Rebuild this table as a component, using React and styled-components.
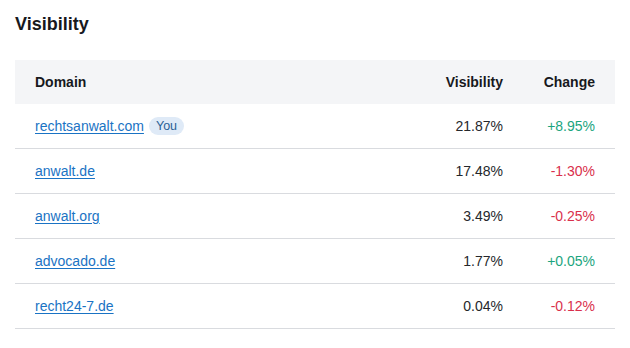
import styled, { createGlobalStyle } from 'styled-components';

const GlobalStyle = createGlobalStyle`
    body {
        margin: 0;
        background: #ffffff;
        font-family: 'Liberation Sans', Arial, sans-serif;
        color: #1b1d21;
    }
`

const Wrapper = styled.div`
    padding: 14px 15px 0 15px;
`
const Title = styled.h2`
    margin: 0 0 25px 0;
    font-size: 18px;
    font-weight: 700;
    line-height: 21px;
    color: #17191d;
`
const Table = styled.div`
    display: grid;
    grid-template-columns: 1fr 112px 92px;
`
const HeadCell = styled.div`
    height: 44px;
    display: flex;
    align-items: center;
    justify-content: ${p => (p.right ? 'flex-end' : 'flex-start')};
    padding: 0 20px;
    background: #f4f5f7;
    font-size: 14px;
    font-weight: 700;
    color: #17191d;
`
const Cell = styled.div`
    height: 44px;
    display: flex;
    align-items: center;
    justify-content: ${p => (p.right ? 'flex-end' : 'flex-start')};
    padding: 0 20px;
    border-bottom: 1px solid #d9dbdf;
    font-size: 14px;
    color: ${p => p.color || '#25272b'};
`
const DomainLink = styled.a`
    color: #1a73c4;
    text-decoration: underline;
    text-underline-offset: 2px;
    cursor: pointer;
`
const Badge = styled.span`
    margin-left: 5px;
    padding: 0 7px;
    height: 18px;
    line-height: 18px;
    border-radius: 9px;
    background: #dfeaf7;
    color: #2a5f95;
    font-size: 12.5px;
`

const rows = [
    { domain: 'rechtsanwalt.com', you: true, visibility: '21.87%', change: '+8.95%' },
    { domain: 'anwalt.de', visibility: '17.48%', change: '-1.30%' },
    { domain: 'anwalt.org', visibility: '3.49%', change: '-0.25%' },
    { domain: 'advocado.de', visibility: '1.77%', change: '+0.05%' },
    { domain: 'recht24-7.de', visibility: '0.04%', change: '-0.12%' },
]

export default function App(){
    return(
        <Wrapper>
            <GlobalStyle />
            <Title>Visibility</Title>
            <Table>
                <HeadCell>Domain</HeadCell>
                <HeadCell right>Visibility</HeadCell>
                <HeadCell right>Change</HeadCell>
                {rows.map(r => [
                    <Cell key={r.domain + 'd'}>
                        <DomainLink>{r.domain}</DomainLink>
                        {r.you && <Badge>You</Badge>}
                    </Cell>,
                    <Cell key={r.domain + 'v'} right>{r.visibility}</Cell>,
                    <Cell key={r.domain + 'c'} right color={r.change.startsWith('+') ? '#1ba57e' : '#d9304c'}>
                        {r.change}
                    </Cell>
                ])}
            </Table>
        </Wrapper>
    )
}
